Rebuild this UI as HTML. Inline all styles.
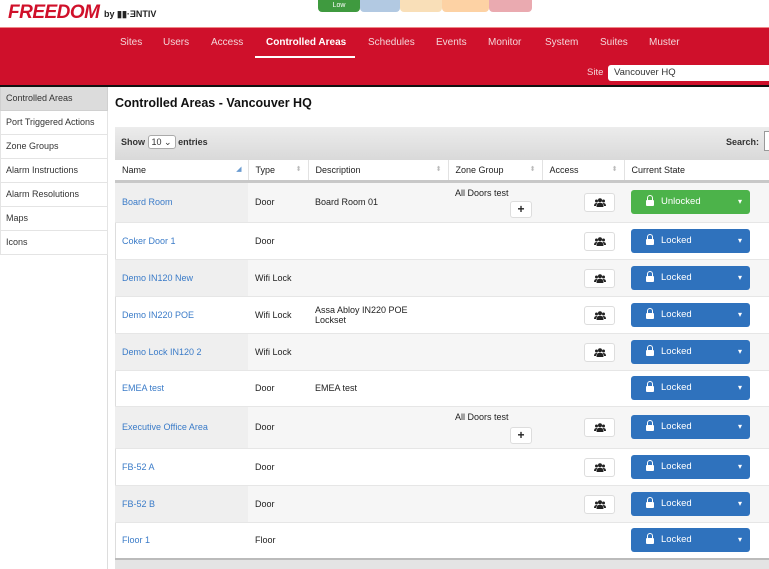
<!DOCTYPE html>
<html><head><meta charset="utf-8"><style>
*{box-sizing:border-box;margin:0;padding:0}
body{width:769px;height:569px;overflow:hidden;background:#fff;font-family:"Liberation Sans",sans-serif;font-size:9px;color:#222;position:relative}
.abs{position:absolute}
.logo{left:8px;top:2px;font-size:19px;font-weight:bold;font-style:italic;color:#d0102a;letter-spacing:-0.5px}
.by{left:104px;top:9px;font-size:9px;font-weight:bold;color:#222}
.bar{top:0;height:12px;border-radius:0 0 4px 4px}
.red{left:0;top:27px;width:769px;height:58px;background:#cf102b;border-top:1px solid #e88}
.blk{left:0;top:85px;width:769px;height:2px;background:#111}
.nav{top:37px;color:#f3d6d9;font-size:10px}
.nav b{color:#fff}
.ul{left:255px;top:56px;width:100px;height:2px;background:#fff}
.side{left:0;top:87px;width:108px;height:482px;border-right:1px solid #ddd}
.si{height:24px;line-height:22px;padding-left:5px;border:1px solid #e4e4e4;border-top:none;font-size:9px;color:#333;width:108px}
h1{position:absolute;left:115px;top:96px;font-size:12.5px;font-weight:bold;color:#111}
.panel{left:115px;top:127px;width:660px;height:442px;border:1px solid #ddd;border-right:none}
.tool{left:115px;top:127px;width:660px;height:33px;background:linear-gradient(#ececec,#d9d9d9);}
table{position:absolute;left:115px;top:160px;width:660px;border-collapse:collapse;table-layout:fixed}
th{height:21px;text-align:left;font-weight:normal;padding-left:7px;border-bottom:3px solid #c8c8c8;border-right:1px solid #e2e2e2;font-size:9px;position:relative;color:#222;background:#fff}
th i{position:absolute;right:6px;top:5px;color:#bbb;font-style:normal;font-size:7px}
td{padding-left:7px;border-top:1px solid #e6e6e6;font-size:9px;vertical-align:middle;position:relative}
tr.o td{background:#f6f6f6}
tr.o td.n{background:#efefef}
td.n{color:#3a7bc8}
.acc{position:absolute;left:-40px;top:50%;margin-top:-9px;width:31px;height:19px;border:1px solid #ddd;border-radius:3px;background:#fff;text-align:center;padding-top:4px}
.btn{width:119px;height:24px;border-radius:3px;color:#fff;font-size:9.5px;line-height:24px;padding-left:30px;position:relative;background:#2f72bd}
.btn.g{background:#4cb34a}
.btn:after{content:"▾";position:absolute;right:8px;top:0;font-size:8px}
.btn s{position:absolute;left:15px;top:6px;width:8px;height:6px;background:#fff;border-radius:1px;margin-top:4px}
.btn s:before{content:"";position:absolute;left:1px;top:-5px;width:4px;height:5px;border:1px solid #fff;border-bottom:none;border-radius:3px 3px 0 0}
.zg{position:absolute;left:7px;top:5px}
.plus{position:absolute;left:62px;width:22px;height:17px;border:1px solid #ddd;border-radius:3px;background:#fff;text-align:center;font-weight:bold;font-size:12px;line-height:15px}
</style></head><body>
<svg width="0" height="0" style="position:absolute"><defs><symbol id="grp" viewBox="0 0 12 9"><circle cx="6" cy="2.3" r="2" fill="#222"/><circle cx="2.5" cy="3" r="1.5" fill="#222"/><circle cx="9.5" cy="3" r="1.5" fill="#222"/><path d="M2.5 9 Q2.5 4.8 6 4.8 Q9.5 4.8 9.5 9Z M0 8 Q0 5 2.5 5 L3.5 5.5 Q2 6.5 2 8Z M12 8 Q12 5 9.5 5 L8.5 5.5 Q10 6.5 10 8Z" fill="#222"/></symbol></defs></svg>
<div class="abs logo">FREEDOM</div>
<div class="abs by">by ▮▮·ƎNTIV</div>
<div class="abs bar" style="left:318px;width:42px;background:#3f9a3f;color:#fff;text-align:center;font-size:7px;line-height:11px">Low</div>
<div class="abs bar" style="left:360px;width:40px;background:#b2c9e2"></div>
<div class="abs bar" style="left:400px;width:42px;background:#f9dfb8"></div>
<div class="abs bar" style="left:442px;width:47px;background:#fdd2a4"></div>
<div class="abs bar" style="left:489px;width:43px;background:#eaaab0"></div>
<div class="abs red"></div>
<div class="abs blk"></div>
<div class="abs nav" style="left:120px">Sites</div>
<div class="abs nav" style="left:163px">Users</div>
<div class="abs nav" style="left:211px">Access</div>
<div class="abs nav" style="left:266px"><b>Controlled Areas</b></div>
<div class="abs nav" style="left:368px">Schedules</div>
<div class="abs nav" style="left:436px">Events</div>
<div class="abs nav" style="left:488px">Monitor</div>
<div class="abs nav" style="left:545px">System</div>
<div class="abs nav" style="left:600px">Suites</div>
<div class="abs nav" style="left:649px">Muster</div>
<div class="abs ul"></div>
<div class="abs" style="left:587px;top:67px;color:#f3d6d9;font-size:9.5px">Site</div>
<div class="abs" style="left:608px;top:65px;width:170px;height:16px;background:#fff;border-radius:3px;padding-left:6px;line-height:16px;font-size:9.5px;color:#333">Vancouver HQ</div>
<div class="abs side">
<div class="si" style="background:#dcdcdc;border-color:#d0d0d0">Controlled Areas</div>
<div class="si">Port Triggered Actions</div>
<div class="si">Zone Groups</div>
<div class="si">Alarm Instructions</div>
<div class="si">Alarm Resolutions</div>
<div class="si">Maps</div>
<div class="si">Icons</div>
</div>
<h1>Controlled Areas - Vancouver HQ</h1>
<div class="abs panel"></div>
<div class="abs tool"></div>
<div class="abs" style="left:121px;top:135px;font-size:9px;font-weight:bold;color:#333">Show <span style="display:inline-block;border:1px solid #aaa;background:#fff;border-radius:3px;padding:0 3px;font-weight:normal;height:14px;line-height:12px">10 ⌄</span> entries</div>
<div class="abs" style="left:726px;top:137px;font-weight:bold;color:#333">Search:</div>
<div class="abs" style="left:764px;top:131px;width:10px;height:20px;border:1px solid #999;background:#fff"></div>
<table>
<colgroup><col style="width:133px"><col style="width:60px"><col style="width:140px"><col style="width:94px"><col style="width:82px"><col style="width:151px"></colgroup>
<tr><th>Name<i style="color:#6a9bd0">◢</i></th><th>Type<i>⬍</i></th><th>Description<i>⬍</i></th><th>Zone Group<i>⬍</i></th><th>Access<i>⬍</i></th><th>Current State</th></tr>
<tr class="o" style="height:41px"><td class="n">Board Room</td><td>Door</td><td>Board Room 01</td><td><span class="zg">All Doors test</span><span class="plus" style="top:18px">+</span></td><td></td><td><span class="acc"><svg width="12" height="9"><use href="#grp"/></svg></span><div class="btn g"><s></s>Unlocked</div></td></tr>
<tr style="height:37px"><td class="n">Coker Door 1</td><td>Door</td><td></td><td></td><td></td><td><span class="acc"><svg width="12" height="9"><use href="#grp"/></svg></span><div class="btn"><s></s>Locked</div></td></tr>
<tr class="o" style="height:37px"><td class="n">Demo IN120 New</td><td>Wifi Lock</td><td></td><td></td><td></td><td><span class="acc"><svg width="12" height="9"><use href="#grp"/></svg></span><div class="btn"><s></s>Locked</div></td></tr>
<tr style="height:37px"><td class="n">Demo IN220 POE</td><td>Wifi Lock</td><td>Assa Abloy IN220 POE<br>Lockset</td><td></td><td></td><td><span class="acc"><svg width="12" height="9"><use href="#grp"/></svg></span><div class="btn"><s></s>Locked</div></td></tr>
<tr class="o" style="height:37px"><td class="n">Demo Lock IN120 2</td><td>Wifi Lock</td><td></td><td></td><td></td><td><span class="acc"><svg width="12" height="9"><use href="#grp"/></svg></span><div class="btn"><s></s>Locked</div></td></tr>
<tr style="height:36px"><td class="n">EMEA test</td><td>Door</td><td>EMEA test</td><td></td><td></td><td><div class="btn"><s></s>Locked</div></td></tr>
<tr class="o" style="height:42px"><td class="n">Executive Office Area</td><td>Door</td><td></td><td><span class="zg">All Doors test</span><span class="plus" style="top:20px">+</span></td><td></td><td><span class="acc"><svg width="12" height="9"><use href="#grp"/></svg></span><div class="btn"><s></s>Locked</div></td></tr>
<tr style="height:37px"><td class="n">FB-52 A</td><td>Door</td><td></td><td></td><td></td><td><span class="acc"><svg width="12" height="9"><use href="#grp"/></svg></span><div class="btn"><s></s>Locked</div></td></tr>
<tr class="o" style="height:37px"><td class="n">FB-52 B</td><td>Door</td><td></td><td></td><td></td><td><span class="acc"><svg width="12" height="9"><use href="#grp"/></svg></span><div class="btn"><s></s>Locked</div></td></tr>
<tr style="height:36px"><td class="n">Floor 1</td><td>Floor</td><td></td><td></td><td></td><td><div class="btn"><s></s>Locked</div></td></tr>
</table>
<div class="abs" style="left:115px;top:558px;width:660px;height:11px;background:#e4e4e4;border-top:2px solid #bbb"></div>
</body></html>
